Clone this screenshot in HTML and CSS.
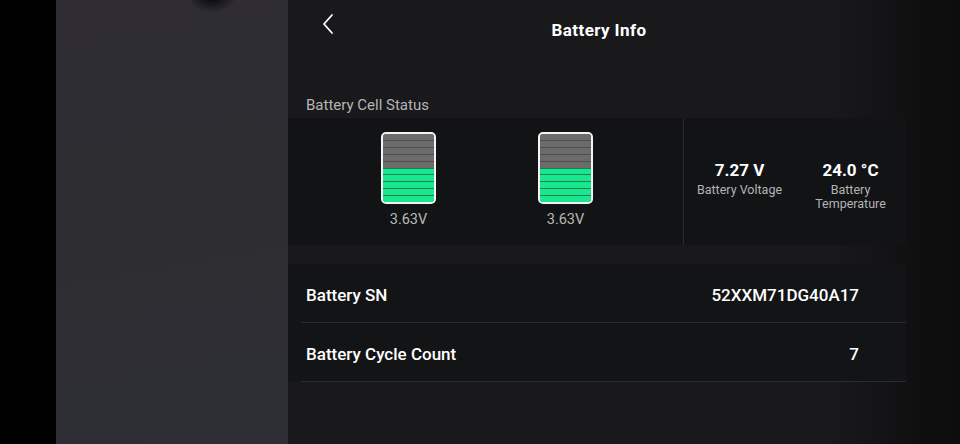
FILE: index.html
```html
<!DOCTYPE html>
<html lang="en">
<head>
    <meta charset="UTF-8">
    <meta name="viewport" content="width=device-width, initial-scale=1.0">
    <title>Battery Info</title>
    <link rel="stylesheet" href="styles.css">
</head>
<body>
    <div class="bezel"></div>

    <!-- Camera preview side panel -->
    <div class="preview"></div>

    <main class="panel">
        <header class="top-bar">
            <button class="back" aria-label="Back">
                <svg width="14" height="22" viewBox="0 0 14 22">
                    <path d="M11 2 L3 11 L11 20" fill="none" stroke="#fff" stroke-width="1.8" stroke-linecap="round" stroke-linejoin="round"/>
                </svg>
            </button>
            <h1>Battery Info</h1>
        </header>

        <div class="section-label">Battery Cell Status</div>

        <section class="cell-card">
            <div class="cells">
                <div class="cell">
                    <div class="battery">
                        <span class="seg"></span><span class="seg"></span><span class="seg"></span><span class="seg"></span><span class="seg"></span>
                        <span class="seg on"></span><span class="seg on"></span><span class="seg on"></span><span class="seg on"></span><span class="seg on"></span>
                    </div>
                    <div class="cell-volt">3.63V</div>
                </div>
                <div class="cell">
                    <div class="battery">
                        <span class="seg"></span><span class="seg"></span><span class="seg"></span><span class="seg"></span><span class="seg"></span>
                        <span class="seg on"></span><span class="seg on"></span><span class="seg on"></span><span class="seg on"></span><span class="seg on"></span>
                    </div>
                    <div class="cell-volt">3.63V</div>
                </div>
            </div>
            <div class="stats">
                <div class="stat">
                    <div class="stat-value">7.27 V</div>
                    <div class="stat-label">Battery Voltage</div>
                </div>
                <div class="stat">
                    <div class="stat-value">24.0 °C</div>
                    <div class="stat-label">Battery<br>Temperature</div>
                </div>
            </div>
        </section>

        <section class="info-list">
            <div class="info-row">
                <span class="info-name">Battery SN</span>
                <span class="info-value">52XXM71DG40A17</span>
            </div>
            <div class="info-row">
                <span class="info-name">Battery Cycle Count</span>
                <span class="info-value">7</span>
            </div>
        </section>
    </main>
</body>
</html>
```

FILE: styles.css
```css
html, body {
    height: 100%;
}

body {
    margin: 0;
    display: flex;
    background: #000;
    font-family: Roboto, "Noto Sans", sans-serif;
    color: #fff;
    overflow: hidden;
}

.bezel {
    width: 56px;
    background: #000;
}

.preview {
    width: 233px;
    background:
        radial-gradient(ellipse 24px 14px at 156px -2px, rgba(5, 5, 8, 0.95), rgba(20, 20, 24, 0) 100%),
        linear-gradient(170deg, #2e2c32 0%, #2d2d32 50%, #2e2f34 100%);
}

.panel {
    flex: 1;
    padding-right: 54px;
    background: linear-gradient(90deg, #19191b 0%, #19191b 80%, #141416 88%, #0e0e0f 95%, #0d0d0d 100%);
}

/* Header */
.top-bar {
    position: relative;
    height: 60px;
    display: flex;
    align-items: center;
    justify-content: center;
}

.back {
    position: absolute;
    left: 33px;
    top: 13px;
    background: none;
    border: none;
    padding: 0;
    cursor: pointer;
}

.top-bar h1 {
    margin: 0;
    font-size: 17px;
    font-weight: 700;
    letter-spacing: 0.4px;
    transform: translateX(2px);
}

.section-label {
    padding: 36px 0 0 18px;
    height: 22px;
    font-size: 15px;
    color: #b4b4b4;
}

/* Cell status card */
.cell-card {
    display: flex;
    height: 127px;
    background: #121315;
}

.cells {
    width: 396px;
    display: flex;
    padding-left: 42px;
    box-sizing: border-box;
    border-right: 1px solid #2a2b2e;
}

.cell {
    width: 157px;
    display: flex;
    flex-direction: column;
    align-items: center;
    padding-top: 14px;
}

.battery {
    width: 55px;
    height: 72px;
    box-sizing: border-box;
    border: 2px solid #f4f4f4;
    border-radius: 5px;
    display: flex;
    flex-direction: column;
    overflow: hidden;
    background: #6a6a6a;
}

.seg {
    flex: 1;
    background: #6b6b6b;
    border-top: 1px solid #4e4e4e;
}

.seg:first-child {
    border-top: none;
}

.seg.on {
    background: #1ae68d;
    border-top-color: #138455;
}

.cell-volt {
    margin-top: 7px;
    font-size: 14.5px;
    color: #b8b8b8;
}

.stats {
    display: flex;
    padding-top: 42px;
}

.stat {
    width: 111px;
    text-align: center;
}

.stat-value {
    font-size: 17px;
    font-weight: 700;
}

.stat-label {
    margin-top: 3px;
    font-size: 12.5px;
    line-height: 14px;
    color: #b4b4b4;
}

/* SN / cycle rows */
.info-list {
    margin-top: 19px;
    background: #131416;
}

.info-row {
    display: flex;
    justify-content: space-between;
    align-items: center;
    height: 59px;
    box-sizing: border-box;
    padding: 3px 47px 0 5px;
    margin-left: 13px;
    border-bottom: 1px solid #2a2b2d;
}

.info-name,
.info-value {
    font-size: 17px;
    font-weight: 500;
}
```
